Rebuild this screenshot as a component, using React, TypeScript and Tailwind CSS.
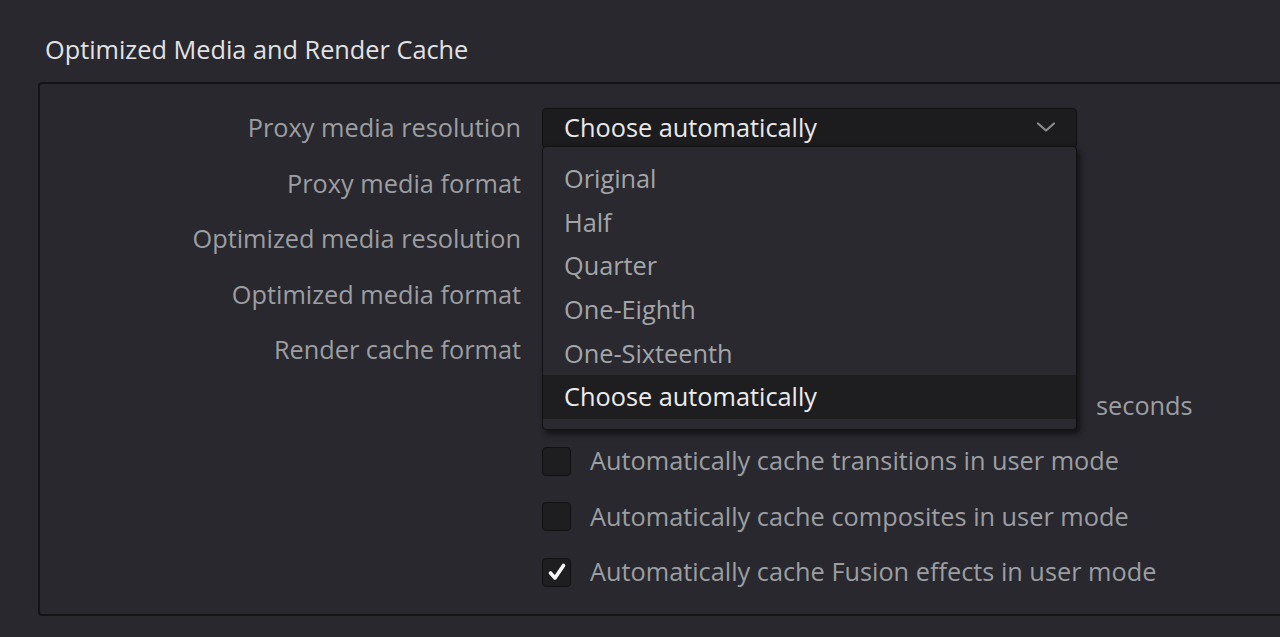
import { useState } from 'react';

const resolutionOptions = ['Original', 'Half', 'Quarter', 'One-Eighth', 'One-Sixteenth', 'Choose automatically'];

// rows 2-5 sit under the open menu, so their pickers are drawn empty
const fieldRows = [
  'Proxy media resolution',
  'Proxy media format',
  'Optimized media resolution',
  'Optimized media format',
  'Render cache format',
];

const cacheToggles = [
  { label: 'Automatically cache transitions in user mode', checked: false },
  { label: 'Automatically cache composites in user mode', checked: false },
  { label: 'Automatically cache Fusion effects in user mode', checked: true },
];

function Chevron() {
  return (
    <svg width="20" height="12" viewBox="0 0 20 12" fill="none" className="text-[#8c8c90]">
      <path d="M2 2.5 L10 9.5 L18 2.5" stroke="currentColor" strokeWidth="2.2" strokeLinecap="round" strokeLinejoin="round" />
    </svg>
  );
}

function Trigger({ value }: { value?: string }) {
  return (
    <div className="flex h-[40px] w-[535px] items-center justify-between rounded-[4px] border border-[#111113] bg-[#1c1c1e] pb-[2px] pl-[21px] pr-[20px] text-[#e8e8ea]">
      <span>{value}</span>
      <Chevron />
    </div>
  );
}

function Checkbox({ checked }: { checked: boolean }) {
  return (
    <div className="flex h-[29px] w-[29px] items-center justify-center rounded-[4px] border border-[#111113] bg-[#1e1e21]">
      {checked && (
        <svg width="20" height="20" viewBox="0 0 20 20">
          <path d="M3.5 11 L8 16 L16.5 3.5" fill="none" stroke="#f6f6f6" strokeWidth="3.6" strokeLinecap="round" strokeLinejoin="round" />
        </svg>
      )}
    </div>
  );
}

export default function App() {
  const [selected, setSelected] = useState('Choose automatically');
  const [toggles, setToggles] = useState(cacheToggles.map((t) => t.checked));

  return (
    <div className="h-[637px] w-[1280px] overflow-hidden bg-[#28282e] font-['Open_Sans',sans-serif] text-[25.3px] leading-[32px]">
      <h2 className="pl-[45px] pt-[33px] text-[#e2e2e4]">Optimized Media and Render Cache</h2>

      <div className="relative ml-[38px] mr-[-20px] mt-[17px] h-[534px] rounded-[4px] border-2 border-[#141417] pt-[24px]">
        <div className="flex flex-col gap-y-[15.5px]">
          {fieldRows.map((label, i) => (
            <div key={label} className="flex h-[40px] items-center gap-[21px]">
              <div className="w-[481px] pb-[2px] text-right text-[#9c9ea2]">{label}</div>
              <div className="relative">
                <Trigger value={i === 0 ? selected : undefined} />
                {i === 0 && (
                  <div className="absolute left-0 top-[38px] z-10 w-[535px] rounded-[4px] border border-[#111113] bg-[#29292f] py-[10px] shadow-[3px_4px_6px_rgba(0,0,0,0.55)]">
                    {resolutionOptions.map((opt) => (
                      <div
                        key={opt}
                        onClick={() => setSelected(opt)}
                        className={`flex h-[43.6px] items-center pb-[1px] pl-[21px] ${
                          opt === selected ? 'bg-[#1e1e21] text-[#ececee]' : 'text-[#a3a5a9]'
                        }`}
                      >
                        {opt}
                      </div>
                    ))}
                  </div>
                )}
              </div>
            </div>
          ))}

          <div className="flex h-[40px] items-center gap-[19px] pl-[502px]">
            <div className="h-[40px] w-[535px] rounded-[4px] border border-[#111113] bg-[#1c1c1e]" />
            <span className="pb-[2px] text-[#9c9ea2]">seconds</span>
          </div>

          {cacheToggles.map((t, i) => (
            <div
              key={t.label}
              className="flex h-[40px] cursor-default items-center gap-[19px] pl-[502px]"
              onClick={() => setToggles(toggles.map((v, j) => (j === i ? !v : v)))}
            >
              <Checkbox checked={toggles[i]} />
              <span className="pb-[2px] text-[#9c9ea2]">{t.label}</span>
            </div>
          ))}
        </div>
      </div>
    </div>
  );
}
